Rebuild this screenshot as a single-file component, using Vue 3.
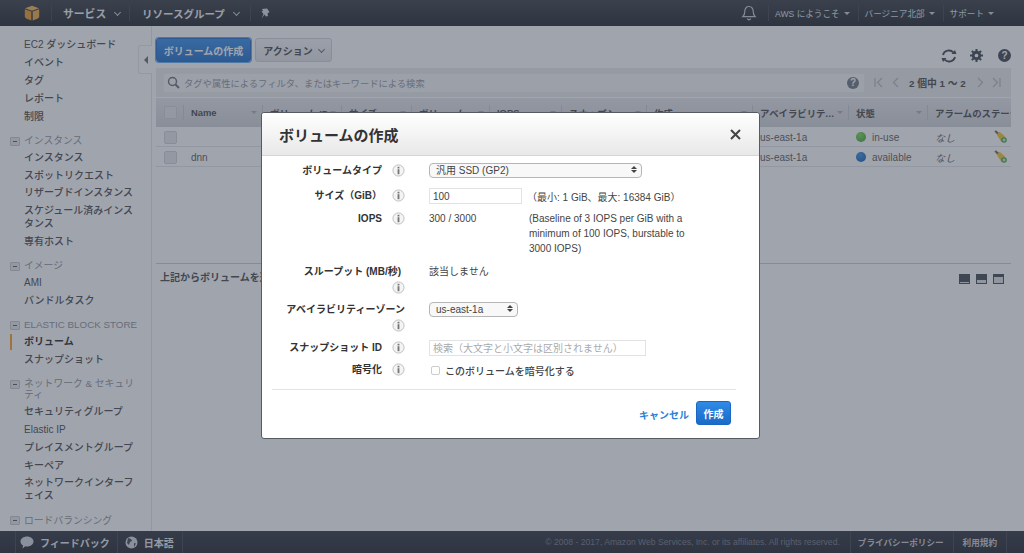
<template>
  <div class="console">
    <svg class="defs" width="0" height="0">
      <symbol id="info" viewBox="0 0 14 14">
        <circle cx="7" cy="7" r="6" fill="#f4f4f4" stroke="#bbb" />
        <rect x="6" y="5.6" width="2" height="5.4" fill="#777" />
        <rect x="6" y="3" width="2" height="1.8" fill="#777" />
      </symbol>
      <symbol id="bell" viewBox="0 0 18 18">
        <path d="M9 2.5c-3 0-4.2 2.4-4.2 5 0 2.6-.8 4-2 5.2h12.4c-1.2-1.2-2-2.6-2-5.2 0-2.6-1.2-5-4.200-5zM7.400 14.500c.3 1 .9 1.400 1.600 1.400s1.300-.4 1.600-1.400" fill="none" stroke="#c8ccd2" stroke-width="1.200" />
      </symbol>
      <symbol id="broom" viewBox="0 0 14 14">
        <path d="M.5 1.500L2 .2l3.500 3-1.800 1.800z" fill="#7d6322" />
        <path d="M3 5l3-3 6 5-1.500 3.500-2.500 2.500z" fill="#f0c52c" />
        <circle cx="10.800" cy="10.800" r="3" fill="#3fa33f" />
        <path d="M9.200 10.800h3.200M10.800 9.200v3.200" stroke="#fff" stroke-width="1.100" />
      </symbol>
    </svg>

    <header class="topbar">
      <div class="logo">
        <svg width="16" height="16" viewBox="0 0 16 16">
          <path d="M8 .8l7 2.400-7 2.600-7-2.600z" fill="#f6b24a" />
          <path d="M.8 4.200l6.500 2.400v9l-5.200-2.200L.8 12z" fill="#e8962b" />
          <path d="M15.200 4.200L8.700 6.600v9l5.200-2.200 1.300-1.400z" fill="#f1a63a" />
        </svg>
      </div>
      <div class="nav-item strong">サービス<i class="chev"></i></div>
      <div class="nav-item strong">リソースグループ<i class="chev"></i></div>
      <div class="nav-pin">
        <svg width="11" height="11" viewBox="0 0 11 11">
          <path d="M2 1l5-.5 2.500 3.500-2 1.500.5 2.500-2 .5-1.500-2-3 4 2-4.500-2-2.500 1.500-.5z" fill="#d8dbe0" />
        </svg>
      </div>
      <div class="top-right">
        <svg class="bell" width="18" height="18"><use href="#bell" /></svg>
        <div v-for="m in topMenus" :key="m" class="menu-item">{{ m }}<i class="caret"></i></div>
      </div>
    </header>

    <div class="workspace">
      <aside class="sidebar">
        <template v-for="group in sideNav" :key="group.title">
          <div v-if="group.title !== '-'" class="side-title">
            <span class="side-minus"></span>
            <span>{{ group.title }}</span>
          </div>
          <a
            v-for="item in group.items"
            :key="item"
            class="side-item"
            :class="{ current: item === 'ボリューム' }"
          >{{ item }}</a>
        </template>
        <div class="side-toggle"><i></i></div>
      </aside>

      <main class="content">
        <div class="toolbar">
          <button class="btn primary">ボリュームの作成</button>
          <button class="btn">アクション<i class="chev dark"></i></button>
          <div class="tool-icons">
            <svg width="16" height="14" viewBox="0 0 16 14">
              <path d="M2 6a6 5.500 0 0 1 10.500-2.500M14 8a6 5.500 0 0 1-10.500 2.500" fill="none" stroke="#3a4049" stroke-width="1.800" />
              <path d="M10.500 5h5l-1.500-4zM5.500 9h-5l1.500 4z" fill="#3a4049" />
            </svg>
            <svg class="gear" width="13" height="13" viewBox="0 0 14 14">
              <circle cx="7" cy="7" r="3.500" fill="none" stroke="#3a4049" stroke-width="3" />
              <path d="M7 0v3M7 11v3M0 7h3M11 7h3M2 2l2 2M10 10l2 2M12 2l-2 2M4 10l-2 2" stroke="#3a4049" stroke-width="2.200" />
            </svg>
            <span class="help big">?</span>
          </div>
        </div>

        <div class="filter-bar">
          <div class="filter-box">
            <svg width="13" height="13" viewBox="0 0 13 13">
              <circle cx="5.500" cy="5.500" r="4" fill="none" stroke="#666c76" stroke-width="1.500" />
              <path d="M8.500 8.500l3.500 3.500" stroke="#666c76" stroke-width="2" />
            </svg>
            <span class="filter-hint">タグや属性によるフィルタ、またはキーワードによる検索</span>
            <span class="help">?</span>
          </div>
          <div class="pager">
            <svg width="9" height="11" viewBox="0 0 9 11"><path d="M1 1v9M8 1L3.500 5.500 8 10" fill="none" stroke="#b4b7bc" stroke-width="1.200" /></svg>
            <svg class="pg-prev" width="7" height="11" viewBox="0 0 7 11"><path d="M6 1L1.500 5.500 6 10" fill="none" stroke="#b4b7bc" stroke-width="1.200" /></svg>
            <b>2 個中 1 〜 2</b>
            <svg width="7" height="11" viewBox="0 0 7 11"><path d="M1 1l4.500 4.500L1 10" fill="none" stroke="#b4b7bc" stroke-width="1.200" /></svg>
            <svg class="pg-last" width="9" height="11" viewBox="0 0 9 11"><path d="M1 1l4.500 4.500L1 10M8 1v9" fill="none" stroke="#b4b7bc" stroke-width="1.200" /></svg>
          </div>
        </div>

        <div class="table-wrap">
          <table class="grid">
            <colgroup>
              <col v-for="(c, i) in columns" :key="i" :style="{ width: c.w + 'px' }" />
            </colgroup>
            <thead>
              <tr>
                <th v-for="(c, i) in columns" :key="i">
                  <span v-if="i === 0" class="check"></span>
                  <template v-else>
                    <span class="th-label">{{ c.label }}</span>
                    <i v-if="i < 10" class="sort"></i>
                  </template>
                </th>
              </tr>
            </thead>
            <tbody>
              <tr v-for="row in volumes" :key="row.state">
                <td><span class="check"></span></td>
                <td>{{ row.name }}</td>
                <td colspan="6"></td>
                <td class="zone">{{ row.zone }}</td>
                <td>
                  <span class="dot" :class="row.dot"></span>{{ row.state }}
                </td>
                <td class="alarm">
                  <em>なし</em>
                  <svg width="13" height="13"><use href="#broom" /></svg>
                </td>
              </tr>
            </tbody>
          </table>
        </div>

        <div class="detail">
          <b>上記からボリュームを選択してください</b>
          <div class="panes">
            <span class="pane p1"></span>
            <span class="pane p2"></span>
            <span class="pane p3"></span>
          </div>
        </div>
      </main>
    </div>

    <footer class="footbar">
      <div class="foot-btn">
        <svg width="14" height="13" viewBox="0 0 14 13">
          <path d="M7 .5c3.600 0 6.500 2.300 6.500 5s-2.900 5-6.500 5c-.6 0-1.200 0-1.700-.2L2.500 12.500l.6-3C1.400 8.500.5 7.100.5 5.500c0-2.700 2.900-5 6.500-5z" fill="#d5d8dd" />
        </svg>
        フィードバック
      </div>
      <div class="foot-btn">
        <svg width="13" height="13" viewBox="0 0 13 13">
          <circle cx="6.500" cy="6.500" r="6" fill="#d5d8dd" />
          <path d="M3 2l3 1 1 2-2 1-1 3-2-2zM9 7l2 .5-2 3.500z" fill="#3a404b" />
        </svg>
        日本語
      </div>
      <span class="copyright">© 2008 - 2017, Amazon Web Services, Inc. or its affiliates. All rights reserved.</span>
      <a class="foot-link">プライバシーポリシー</a>
      <a class="foot-link last">利用規約</a>
    </footer>

    <div class="scrim"></div>

    <section class="modal">
      <div class="modal-head">
        <h2>ボリュームの作成</h2>
        <svg class="close" width="11" height="11" viewBox="0 0 11 11">
          <path d="M1 1l9 9M10 1l-9 9" stroke="#444" stroke-width="2" />
        </svg>
      </div>
      <div class="modal-body">
        <div class="row gap9">
          <label>ボリュームタイプ<svg class="ic"><use href="#info" /></svg></label>
          <div class="select wide">
            <span>汎用 SSD (GP2)</span><i class="updown"></i>
          </div>
        </div>
        <div class="row gap7">
          <label>サイズ（GiB）<svg class="ic"><use href="#info" /></svg></label>
          <div class="val">
            <input class="field size" type="text" value="100" />
            <span class="size-note">（最小: 1 GiB、最大: 16384 GiB）</span>
          </div>
        </div>
        <div class="row gap8">
          <label>IOPS<svg class="ic"><use href="#info" /></svg></label>
          <div class="val top">
            <span class="iops">300 / 3000</span>
            <p class="note">(Baseline of 3 IOPS per GiB with a minimum of 100 IOPS, burstable to 3000 IOPS)</p>
          </div>
        </div>
        <div class="row">
          <label><span class="trail">スループット (MB/秒)</span><svg class="ic"><use href="#info" /></svg></label>
          <div class="val top">該当しません</div>
        </div>
        <div class="row">
          <label>アベイラビリティーゾーン<svg class="ic"><use href="#info" /></svg></label>
          <div class="val top">
            <div class="select narrow">
              <span>us-east-1a</span><i class="updown"></i>
            </div>
          </div>
        </div>
        <div class="row">
          <label>スナップショット ID<svg class="ic"><use href="#info" /></svg></label>
          <input class="field snap" type="text" placeholder="検索（大文字と小文字は区別されません）" />
        </div>
        <div class="row">
          <label>暗号化<svg class="ic"><use href="#info" /></svg></label>
          <div class="val">
            <input class="tick" type="checkbox" />
            <span class="tick-label">このボリュームを暗号化する</span>
          </div>
        </div>
        <div class="modal-foot">
          <a class="cancel">キャンセル</a>
          <button class="create">作成</button>
        </div>
      </div>
    </section>
  </div>
</template>

<script setup>
const topMenus = ['AWS にようこそ', 'バージニア北部', 'サポート']

const sideNav = [
  { title: '-', items: ['EC2 ダッシュボード', 'イベント', 'タグ', 'レポート', '制限'] },
  { title: 'インスタンス', items: ['インスタンス', 'スポットリクエスト', 'リザーブドインスタンス', 'スケジュール済みインスタンス', '専有ホスト'] },
  { title: 'イメージ', items: ['AMI', 'バンドルタスク'] },
  { title: 'ELASTIC BLOCK STORE', items: ['ボリューム', 'スナップショット'] },
  { title: 'ネットワーク & セキュリティ', items: ['セキュリティグループ', 'Elastic IP', 'プレイスメントグループ', 'キーペア', 'ネットワークインターフェイス'] },
  { title: 'ロードバランシング', items: [] },
]

const columns = [
  { w: 27, label: '' },
  { w: 79, label: 'Name' },
  { w: 79, label: 'ボリューム ID' },
  { w: 70, label: 'サイズ' },
  { w: 78, label: 'ボリュームタイプ' },
  { w: 72, label: 'IOPS' },
  { w: 85, label: 'スナップショット' },
  { w: 106, label: '作成' },
  { w: 96, label: 'アベイラビリティーゾーン' },
  { w: 79, label: '状態' },
  { w: 84, label: 'アラームのステータス' },
]

const volumes = [
  { name: '', zone: 'us-east-1a', state: 'in-use', dot: 'green' },
  { name: 'dnn', zone: 'us-east-1a', state: 'available', dot: 'blue' },
]
</script>

<style>
html, body { margin: 0; height: 100%; overflow: hidden; background: #fff; }
</style>

<style scoped>
.console {
  position: relative;
  height: 553px;
  display: flex;
  flex-direction: column;
  overflow: hidden;
  font-family: "Liberation Sans", "Noto Sans CJK JP", sans-serif;
  font-size: 10px;
  color: #444;
  background: #fff;
}
.defs { position: absolute; }

/* top bar */
.topbar {
  height: 26px;
  flex: none;
  display: flex;
  align-items: center;
  background: linear-gradient(#33373e, #1a1e24);
  color: #f0f1f3;
}
.logo { width: 52px; padding-left: 24px; box-sizing: border-box; display: flex; border-right: 1px solid #3a3e46; height: 16px; }
.nav-item { display: flex; align-items: center; box-sizing: border-box; height: 16px; padding-left: 11px; border-right: 1px solid #3a3e46; white-space: nowrap; }
.nav-item:nth-child(2) { width: 78px; font-size: 10.8px; }
.nav-item:nth-child(3) { width: 121px; font-size: 10.5px; padding-left: 12px; }
.strong { font-weight: 700; }
.chev { display: inline-block; width: 4px; height: 4px; margin: -2px 0 0 9px; border-right: 1px solid #c8ccd2; border-bottom: 1px solid #c8ccd2; transform: rotate(45deg); }
.chev.dark { border-color: #666; margin-left: 6px; }
.nav-pin { padding-left: 9px; display: flex; }
.top-right { margin-left: auto; display: flex; align-items: center; padding-right: 22px; }
.bell { margin-right: 10px; }
.menu-item { display: flex; align-items: center; height: 16px; padding: 0 8px 0 6px; border-left: 1px solid #3a3e46; font-size: 8.600px; color: #dfe1e5; white-space: nowrap; }
.caret { width: 0; height: 0; margin-left: 4px; border: 3px solid transparent; border-top-color: #c8ccd2; border-bottom: 0; }

/* main area */
.workspace { flex: 1; min-height: 0; display: flex; }
.sidebar {
  position: relative;
  width: 152px;
  flex: none;
  box-sizing: border-box;
  padding: 10px 13px 0 24px;
  border-right: 1px solid #e2e4e6;
  background: #fff;
}
.side-item { display: block; padding: 2.4px 0; line-height: 13px; color: #444; font-weight: 500; }
.side-item.current { position: relative; font-weight: 700; color: #222; }
.side-item.current::before { content: ""; position: absolute; left: -14px; top: 1px; bottom: 1px; width: 2px; background: #ff9a1f; }
.side-title { position: relative; margin-top: 7.700px; padding: 2.4px 0; line-height: 11px; color: #8b8f96; font-size: 9.800px; }
.side-minus { position: absolute; left: -14px; top: 4px; width: 8px; height: 7px; background: #e6e7e9; border: 1px solid #c4c6ca; border-radius: 1px; }
.side-minus::after { content: ""; position: absolute; left: 2px; right: 2px; top: 3px; height: 1px; background: #555; }
.side-toggle { position: absolute; right: -1px; top: 19px; width: 13px; height: 27px; background: #fff; border: 1px solid #e6e7e9; border-right: 0; border-radius: 3px 0 0 3px; display: flex; align-items: center; justify-content: center; }
.side-toggle i { width: 0; height: 0; border: 4px solid transparent; border-right-color: #666; border-left: 0; }

.content { flex: 1; min-width: 0; padding: 12px 13px 0 4px; display: flex; flex-direction: column; }
.toolbar { height: 24px; display: flex; gap: 4px; flex: none; }
.btn {
  height: 24px;
  padding: 0;
  font: 700 10px "Liberation Sans", "Noto Sans CJK JP", sans-serif;
  color: #444;
  border: 1px solid #d0d2d5;
  border-radius: 3px;
  background: linear-gradient(#f5f5f6, #e3e4e6);
  display: flex;
  align-items: center;
  justify-content: center;
  white-space: nowrap;
}
.btn.primary { width: 95px; color: #fff; border-color: #1a66c2; background: linear-gradient(#2f8ae6, #1a6bc8); box-shadow: 0 0 0 1px #5ba6f0; }
.btn:not(.primary) { width: 77px; }
.tool-icons { margin-left: auto; display: flex; align-items: center; padding-top: 11px; }
.gear { margin: 0 15px 0 13px; }
.help { width: 12px; height: 12px; border-radius: 50%; background: #6d727b; color: #fff; font-weight: 700; font-size: 10px; line-height: 12px; text-align: center; flex: none; }
.help.big { width: 13px; height: 13px; line-height: 13px; background: #3a4049; }

.filter-bar { margin-top: 6px; height: 29px; flex: none; background: #e8eaeb; display: flex; align-items: center; padding-left: 7px; box-sizing: border-box; }
.filter-box { width: 702px; height: 20px; box-sizing: border-box; background: #f6f6f7; border: 1px solid #eceded; border-radius: 2px; display: flex; align-items: center; padding: 0 5px 0 3px; gap: 4px; }
.filter-hint { color: #8d9198; flex: 1; font-size: 9.300px; }
.pager { flex: 1; display: flex; align-items: center; padding-left: 9px; color: #444; }
.pager b { margin: 0 11px 0 10px; white-space: nowrap; font-size: 9.800px; }
.pg-prev { margin-left: 9px; }
.pg-last { margin-left: 8px; }

.table-wrap { height: 167px; flex: none; }
.grid { width: 855px; table-layout: fixed; border-collapse: collapse; margin-top: 1px; }
.grid th { position: relative; height: 29px; padding: 0 0 0 8px; text-align: left; white-space: nowrap; overflow: hidden; font-size: 9.400px; font-weight: 700; color: #444; background: linear-gradient(#e4e6e8, #d0d3d6); }
.grid th + th::before { content: ""; position: absolute; left: 0; top: 7px; bottom: 7px; width: 1px; background: #c6c8cc; }
.grid th:first-child, .grid td:first-child { padding-left: 8px; }
.th-label { display: block; overflow: hidden; text-overflow: ellipsis; width: calc(100% - 8px); }
.grid th:last-child .th-label { width: 100%; text-overflow: clip; }
.sort { position: absolute; right: 5px; top: 13px; width: 0; height: 0; border: 3px solid transparent; border-top-color: #aaa; border-bottom: 0; }
.grid td { height: 18px; padding: 1px 0 0 8px; color: #555; border-bottom: 1px solid #e4e5e7; white-space: nowrap; }
.check { display: block; width: 11px; height: 11px; background: #e6e7e9; border: 1px solid #cfd1d4; border-radius: 2px; }
.dot { display: inline-block; width: 10px; height: 10px; margin-right: 6px; vertical-align: -1px; border-radius: 50%; }
.dot.green { background: radial-gradient(circle at 40% 30%, #7fd94f, #2d9e2d); }
.dot.blue { background: radial-gradient(circle at 40% 30%, #2f8fe4, #0a55a5); }
.alarm { position: relative; color: #666; }
.alarm em { font-style: italic; }
.alarm svg { position: absolute; right: 4px; top: 3px; }

.detail { border-top: 1px solid #c9cbce; padding-top: 7px; display: flex; justify-content: space-between; margin-top: -1px; }
.detail b { padding-left: 4px; line-height: 14px; }
.panes { display: flex; gap: 6px; margin: 3px 7px 0 0; }
.pane { position: relative; width: 11px; height: 10px; background: #3f444d; display: block; }
.pane::after { content: ""; position: absolute; left: 1px; right: 1px; background: #dfe1e4; }
.p1::after { bottom: 1px; height: 1px; }
.p2::after { bottom: 1px; height: 3px; }
.p3::after { bottom: 1px; height: 6px; }

/* footer */
.footbar { height: 22px; flex: none; display: flex; align-items: center; background: linear-gradient(#2a2e36, #1b1f26); color: #e8e9ec; padding-left: 15px; }
.foot-btn { display: flex; align-items: center; gap: 6px; height: 100%; padding: 0 7px 0 4px; font-weight: 700; border-left: 1px solid #3a3e46; }
.foot-btn + .foot-btn { border-right: 1px solid #3a3e46; padding: 0 8px 0 7px; }
.copyright { margin-left: auto; padding-right: 10px; color: #727680; font-size: 8.600px; }
.foot-link { height: 100%; display: flex; align-items: center; padding: 0 9px 0 7px; font-size: 8.600px; font-weight: 700; color: #c8cbd0; border-left: 1px solid #3a3e46; }
.foot-link.last { padding: 0 9px; margin-right: 17px; border-right: 1px solid #3a3e46; }

/* modal */
.scrim { position: absolute; inset: 0; background: rgba(66, 74, 92, 0.5); }
.modal {
  position: absolute;
  left: 261px;
  top: 112px;
  width: 499px;
  height: 327px;
  box-sizing: border-box;
  background: #fff;
  border: 1px solid #555a63;
  border-radius: 3px;
}
.modal-head { height: 43px; box-sizing: border-box; display: flex; align-items: center; justify-content: space-between; padding: 0 18px 0 17px; background: linear-gradient(#fff, #e8e8e8); border-bottom: 1px solid #d5d5d5; border-radius: 3px 3px 0 0; }
.modal-head h2 { margin: 0; font-size: 15px; font-weight: 700; color: #333; }
.modal-body { padding-top: 7px; }
.row { display: flex; margin-bottom: 6px; }
.row.gap9 { margin-bottom: 9px; }
.row.gap7 { margin-bottom: 7px; }
.row.gap8 { margin-bottom: 8px; }
.row label { width: 143px; flex: none; box-sizing: border-box; padding-left: 24px; text-align: right; font-weight: 700; line-height: 16px; color: #333; }
.trail { margin-right: 4px; }
.ic { display: inline-block; width: 13px; height: 13px; margin-left: 10px; vertical-align: -3px; }
.val { margin-left: 24px; display: flex; align-items: center; color: #444; }
.val.top { align-items: flex-start; line-height: 15px; }
.select { position: relative; height: 15px; margin-left: 24px; box-sizing: border-box; border: 1px solid #b5b5b5; border-radius: 4px; background: #f8f8f8; padding-left: 6px; line-height: 14px; }
.select.wide { width: 213px; }
.select.narrow { width: 89px; margin-left: 0; }
.updown { position: absolute; right: 4px; top: 2px; width: 0; height: 0; border: 3px solid transparent; border-bottom-color: #444; border-top: 0; }
.updown::after { content: ""; position: absolute; left: -3px; top: 4px; width: 0; height: 0; border: 3px solid transparent; border-top-color: #444; border-bottom: 0; }
.field { height: 16px; box-sizing: border-box; padding: 0 3px; font: 10px "Liberation Sans", "Noto Sans CJK JP", sans-serif; color: #444; background: #fff; border: 1px solid #e2e2e2; outline: 0; }
.field.size { width: 93px; }
.size-note { margin-left: 5px; }
.iops { width: 100px; flex: none; }
.note { margin: 0; width: 172px; }
.field.snap { width: 217px; margin-left: 24px; }
.field.snap::placeholder { color: #aaa; }
.tick { appearance: none; width: 9px; height: 9px; margin: 0 5px 0 2px; border: 1px solid #ccc; border-radius: 2px; background: #fff; }
.tick-label { font-weight: 500; }
.modal-foot { margin: 11px 23px 0 10px; padding: 11px 5px 0 0; border-top: 1px solid #e4e4e4; display: flex; justify-content: flex-end; align-items: center; gap: 7px; }
.cancel { color: #2a7fd8; font-weight: 700; padding-top: 3px; }
.create { width: 35px; height: 24px; padding: 0; font: 700 10px "Liberation Sans", "Noto Sans CJK JP", sans-serif; color: #fff; border: 1px solid #1a66c2; border-radius: 3px; background: linear-gradient(#2f8ae6, #1a6bc8); }
</style>
